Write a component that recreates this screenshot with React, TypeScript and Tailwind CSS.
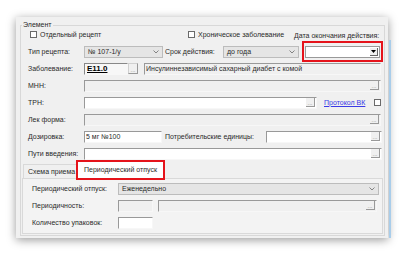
import React from "react";

function Dots() {
  return (
    <div className="ml-auto mr-[1px] h-[9px] w-[9px] flex items-end justify-center bg-[#f0f0f0] border-r border-b border-[#999] text-[6px] leading-[6px] text-[#888]">
      ...
    </div>
  );
}

function Field({
  w,
  white,
  dots,
  children,
}: {
  w: string;
  white?: boolean;
  dots?: boolean;
  children?: React.ReactNode;
}) {
  return (
    <div
      className={`${w} h-[12px] flex items-center border border-t-[#999] border-l-[#999] border-b-[#f7f7f7] border-r-[#f7f7f7] ${
        white ? "bg-white" : "bg-[#f0f0f0]"
      }`}
    >
      <span className="pl-[1px] whitespace-nowrap">{children}</span>
      {dots && <Dots />}
    </div>
  );
}

function Combo({ w, value }: { w: string; value: string }) {
  return (
    <div
      className={`${w} h-[12px] flex items-center bg-[#e5e5e5] border border-[#bcbcbc] pl-[3px] pr-[3px]`}
    >
      <span className="whitespace-nowrap">{value}</span>
      <svg className="ml-auto" width="6" height="4" viewBox="0 0 6 4">
        <path d="M0.5 0.5 L3 3 L5.5 0.5" fill="none" stroke="#777" strokeWidth="0.9" />
      </svg>
    </div>
  );
}

function Check() {
  return <div className="w-[7px] h-[7px] border border-[#6a6a6a] bg-white shrink-0" />;
}

function Row({ children, className = "" }: { children: React.ReactNode; className?: string }) {
  return <div className={`h-[17px] flex items-center ${className}`}>{children}</div>;
}

function Label({ w, children }: { w: string; children: React.ReactNode }) {
  return <div className={`${w} shrink-0 whitespace-nowrap`}>{children}</div>;
}

export default function App() {
  return (
    <div className="w-[408px] h-[255px] bg-white overflow-hidden font-['Liberation_Sans',Arial,sans-serif] text-[7px] leading-[8px] text-[#2a2a2a]">
      <div className="flex pl-[16px] pt-[17px]">
        <div className="w-[372px] h-[221px] bg-[#f0f0f0] shadow-[0_2px_9px_rgba(0,0,0,0.4)] pl-[4px] pt-[8px]">
          {/* group box */}
          <div className="relative w-[365px] h-[211px] border border-[#d8d8d8]">
            <div className="absolute left-[1px] -top-[5px] px-[1px] bg-[#f0f0f0]">Элемент</div>

            <Row className="pl-[9px]">
              <div className="w-[158px] flex items-center">
                <Check />
                <span className="ml-[3px]">Отдельный рецепт</span>
              </div>
              <div className="w-[106px] flex items-center">
                <Check />
                <span className="ml-[3px] whitespace-nowrap">Хроническое заболевание</span>
              </div>
              <span className="whitespace-nowrap pt-[2px]">Дата окончания действия:</span>
            </Row>

            <Row className="pl-[7px]">
              <Label w="w-[56px]">Тип рецепта:</Label>
              <Combo w="w-[79px]" value="№ 107-1/у" />
              <Label w="w-[58px] ml-[2px]">Срок действия:</Label>
              <Combo w="w-[76px]" value="до года" />
              <div className="relative ml-[6px]">
                <div className="w-[75px] h-[12px] flex items-center bg-white border border-[#999]">
                  <div className="ml-auto mr-[1px] w-[8px] h-[8px] flex items-center justify-center bg-[#f0f0f0] border-r border-b border-[#666]">
                    <svg width="5" height="3" viewBox="0 0 5 3">
                      <path d="M0 0 H5 L2.5 3 Z" fill="#000" />
                    </svg>
                  </div>
                </div>
                <div className="absolute -left-[3px] -right-[3px] -top-[5px] -bottom-[4px] border-2 border-[#e5131b]" />
              </div>
            </Row>

            <Row className="pl-[7px]">
              <Label w="w-[56px]">Заболевание:</Label>
              <div className="w-[44px] h-[12px] flex items-center border border-t-[#888] border-l-[#888] border-b-[#f7f7f7] border-r-[#f7f7f7] bg-[#f7f7f7]">
                <span className="pl-[2px] text-[8px] font-bold underline text-black">E11.0</span>
              </div>
              <div className="w-[10px] h-[11px] flex items-end justify-center bg-[#f0f0f0] border border-[#d0d0d0] border-r-[#999] border-b-[#999] text-[6px] leading-[6px] text-[#888]">
                ...
              </div>
              <div className="ml-[6px]">
                <Field w="w-[237px]">Инсулиннезависимый сахарный диабет с комой</Field>
              </div>
            </Row>

            <Row className="pl-[7px]">
              <Label w="w-[56px]">МНН:</Label>
              <Field w="w-[297px]" dots />
            </Row>

            <Row className="pl-[7px]">
              <Label w="w-[56px]">ТРН:</Label>
              <Field w="w-[233px]" white dots />
              <a className="ml-[7px] w-[50px] text-[#3a3ae6] underline whitespace-nowrap">Протокол ВК</a>
              <Check />
            </Row>

            <Row className="pl-[7px]">
              <Label w="w-[56px]">Лек форма:</Label>
              <Field w="w-[297px]" dots />
            </Row>

            <Row className="pl-[7px]">
              <Label w="w-[56px]">Дозировка:</Label>
              <Field w="w-[78px]" white>
                5 мг №100
              </Field>
              <Label w="w-[101px] ml-[3px]">Потребительские единицы:</Label>
              <Field w="w-[116px]" white dots />
            </Row>

            <Row className="pl-[7px]">
              <Label w="w-[56px]">Пути введения:</Label>
              <Field w="w-[298px]" white dots />
            </Row>

            {/* tabs */}
            <div className="h-[16px] flex items-end pl-[2px]">
              <div className="w-[54px] h-[14px] flex items-center pl-[4px] bg-[#f0f0f0] border border-b-0 border-[#d9d9d9] whitespace-nowrap">
                Схема приема
              </div>
              <div className="relative">
                <div className="w-[87px] h-[17px] flex items-center pl-[6px] bg-white border border-b-0 border-[#d9d9d9] whitespace-nowrap">
                  Периодический отпуск
                </div>
                <div className="absolute -left-[1px] -right-[1px] -top-[1px] -bottom-[2px] border-2 border-[#e5131b]" />
              </div>
            </div>
            <div className="ml-[1px] w-[361px] h-[56px] border border-[#d9d9d9] bg-[#f3f3f3] pl-[9px] pt-[1px]">
              <Row>
                <Label w="w-[86px]">Периодический отпуск:</Label>
                <Combo w="w-[261px]" value="Еженедельно" />
              </Row>
              <Row>
                <Label w="w-[86px]">Периодичность:</Label>
                <Field w="w-[35px]" />
                <div className="ml-[5px]">
                  <Field w="w-[219px]" dots />
                </div>
              </Row>
              <Row>
                <Label w="w-[86px]">Количество упаковок:</Label>
                <Field w="w-[35px]" white />
              </Row>
            </div>
          </div>
        </div>
        <div className="ml-[1px] mt-[23px] w-[2px] h-[198px] bg-[#a9cdea]" />
      </div>
    </div>
  );
}
